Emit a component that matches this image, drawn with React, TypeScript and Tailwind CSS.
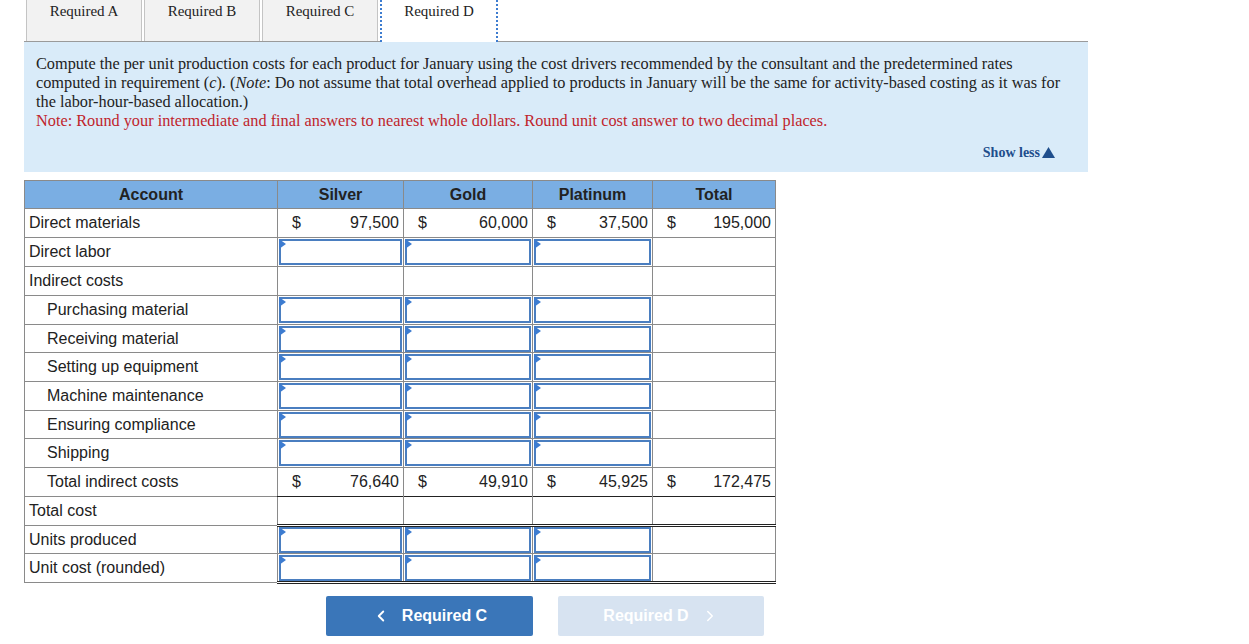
import { ChevronLeft, ChevronRight } from "lucide-react";

type Cell = { kind: "empty" } | { kind: "input" } | { kind: "money"; value: string };

type Row = {
  label: string;
  indent?: boolean;
  h: number;
  cells: Cell[];
  total?: Cell;
  topDark?: boolean;
  bottomDouble?: boolean;
};

const E: Cell = { kind: "empty" };
const I: Cell = { kind: "input" };
const m = (value: string): Cell => ({ kind: "money", value });

const rows: Row[] = [
  { label: "Direct materials", h: 29, cells: [m("97,500"), m("60,000"), m("37,500")], total: m("195,000") },
  { label: "Direct labor", h: 29, cells: [I, I, I], total: E },
  { label: "Indirect costs", h: 29, cells: [E, E, E], total: E },
  { label: "Purchasing material", indent: true, h: 29, cells: [I, I, I], total: E },
  { label: "Receiving material", indent: true, h: 28, cells: [I, I, I], total: E },
  { label: "Setting up equipment", indent: true, h: 29, cells: [I, I, I], total: E },
  { label: "Machine maintenance", indent: true, h: 29, cells: [I, I, I], total: E },
  { label: "Ensuring compliance", indent: true, h: 28, cells: [I, I, I], total: E },
  { label: "Shipping", indent: true, h: 29, cells: [I, I, I], total: E },
  { label: "Total indirect costs", indent: true, h: 29, cells: [m("76,640"), m("49,910"), m("45,925")], total: m("172,475"), topDark: true },
  { label: "Total cost", h: 29, cells: [E, E, E], total: E, topDark: true, bottomDouble: true },
  { label: "Units produced", h: 28, cells: [I, I, I], total: E },
  { label: "Unit cost (rounded)", h: 29, cells: [I, I, I], total: E, bottomDouble: true },
];

const tabs = ["Required A", "Required B", "Required C", "Required D"];

function DataCell({ cell, row }: { cell: Cell; row: Row }) {
  const edge = [
    row.topDark ? "border-t-[#222]" : "border-t-[#8a8a8a]",
    row.bottomDouble ? "border-b-[3px] border-b-[#222] border-double" : "border-b-[#8a8a8a]",
  ].join(" ");
  return (
    <td className={`border border-[#8a8a8a] p-0 ${edge}`} style={{ height: row.h }}>
      {cell.kind === "money" ? (
        <div className="flex items-center justify-between pl-[14px] pr-[4px]">
          <span>$</span>
          <span>{cell.value}</span>
        </div>
      ) : cell.kind === "input" ? (
        <div className="relative mx-px h-[26px] border-2 border-[#4a7ec0] bg-white">
          <span className="absolute -left-[2px] -top-[2px] h-0 w-0 border-y-[5px] border-l-[7px] border-y-transparent border-l-[#3d7cd0]" />
        </div>
      ) : null}
    </td>
  );
}

export default function App() {
  return (
    <div className="min-h-[644px] w-[1249px] bg-white font-['Liberation_Serif',serif] text-[#222]">
      <div className="flex pl-[26px]">
        {tabs.map((t, i) =>
          i === 3 ? (
            <div
              key={t}
              className="relative z-10 -mb-px flex h-[42px] w-[118px] justify-center border-x-2 border-dotted border-[#3d7cd0] bg-white pt-0 text-[15px]"
            >
              {t}
            </div>
          ) : (
            <div
              key={t}
              className="mr-[2px] flex h-[41px] w-[116px] justify-center border-x border-[#c4c4c4] bg-[#f2f2f2] pt-0 text-[15px]"
            >
              {t}
            </div>
          )
        )}
      </div>

      <div className="ml-[24px] w-[1064px] border-t border-[#9a9a9a] bg-[#d9ebf9] pb-[10px] pl-[12px] pr-[24px] pt-[12px] text-[16.3px] leading-[19px]">
        <p>
          Compute the per unit production costs for each product for January using the cost drivers recommended by the
          consultant and the predetermined rates computed in requirement (<i>c</i>). (<i>Note</i>: Do not assume that total
          overhead applied to products in January will be the same for activity-based costing as it was for the labor-hour-based
          allocation.)
        </p>
        <p className="text-[#c0242c]">
          Note: Round your intermediate and final answers to nearest whole dollars. Round unit cost answer to two decimal places.
        </p>
        <div className="mt-[13px] flex justify-end pr-[9px]">
          <span className="flex items-center gap-[2px] text-[14px] font-bold text-[#1f4e8c]">
            Show less
            <svg width="13" height="11" viewBox="0 0 12 10">
              <path d="M6 0L12 10H0Z" fill="#1f4e8c" />
            </svg>
          </span>
        </div>
      </div>

      <table className="ml-[24px] mt-[8px] table-fixed border-collapse font-['Liberation_Sans',Arial,sans-serif] text-[16px] text-[#222]">
        <colgroup>
          <col className="w-[253px]" />
          <col className="w-[126px]" />
          <col className="w-[129px]" />
          <col className="w-[120px]" />
          <col className="w-[123px]" />
        </colgroup>
        <thead>
          <tr className="h-[28px] bg-[#7aaee3] font-bold">
            {["Account", "Silver", "Gold", "Platinum", "Total"].map((h) => (
              <th key={h} className="border border-[#8a8a8a] p-0 text-center">
                {h}
              </th>
            ))}
          </tr>
        </thead>
        <tbody>
          {rows.map((r) => (
            <tr key={r.label}>
              <td
                className={`border border-[#8a8a8a] p-0 ${r.indent ? "pl-[22px]" : "pl-[4px]"}`}
                style={{ height: r.h }}
              >
                {r.label}
              </td>
              {r.cells.map((c, i) => (
                <DataCell key={i} cell={c} row={r} />
              ))}
              <DataCell cell={r.total ?? E} row={r} />
            </tr>
          ))}
        </tbody>
      </table>

      <div className="ml-[326px] mt-[12px] flex gap-[25px] font-['Liberation_Sans',Arial,sans-serif] text-[16px] font-bold text-white">
        <button className="flex h-[40px] w-[207px] items-center justify-center gap-[12px] rounded-[2px] bg-[#3a76b9]">
          <ChevronLeft size={18} strokeWidth={2.5} />
          Required C
        </button>
        <button className="flex h-[40px] w-[206px] items-center justify-center gap-[12px] rounded-[2px] bg-[#d7e3f1]">
          Required D
          <ChevronRight size={18} strokeWidth={2} />
        </button>
      </div>
    </div>
  );
}
